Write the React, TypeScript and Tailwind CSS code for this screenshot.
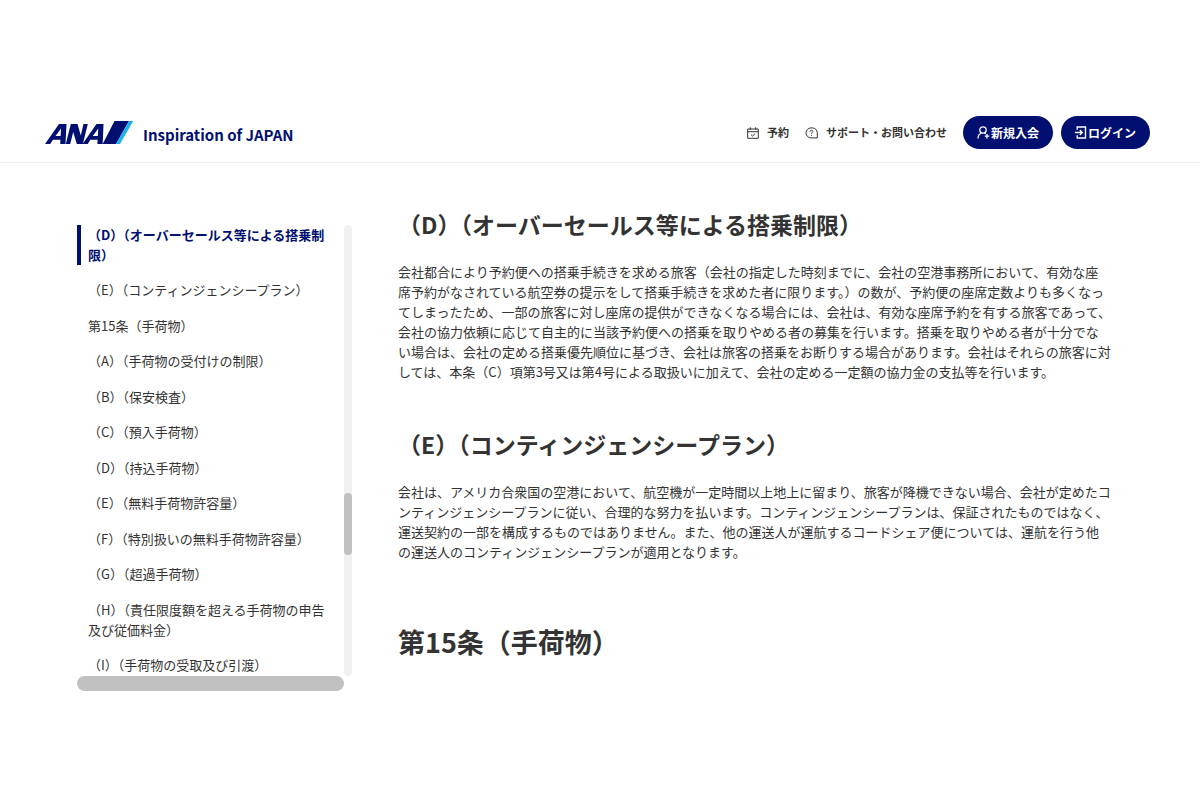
import React, { ReactNode } from "react";

type Chapter = {
  label: string;
  current?: boolean;
};

const chapters: Chapter[] = [
  { label: "（D）（オーバーセールス等による搭乗制限）", current: true },
  { label: "（E）（コンティンジェンシープラン）" },
  { label: "第15条（手荷物）" },
  { label: "（A）（手荷物の受付けの制限）" },
  { label: "（B）（保安検査）" },
  { label: "（C）（預入手荷物）" },
  { label: "（D）（持込手荷物）" },
  { label: "（E）（無料手荷物許容量）" },
  { label: "（F）（特別扱いの無料手荷物許容量）" },
  { label: "（G）（超過手荷物）" },
  { label: "（H）（責任限度額を超える手荷物の申告及び従価料金）" },
  { label: "（I）（手荷物の受取及び引渡）" },
];

const oversales = [
  "会社都合により予約便への搭乗手続きを求める旅客（会社の指定した時刻までに、会社の空港事務所において、有効な座",
  "席予約がなされている航空券の提示をして搭乗手続きを求めた者に限ります。）の数が、予約便の座席定数よりも多くなっ",
  "てしまったため、一部の旅客に対し座席の提供ができなくなる場合には、会社は、有効な座席予約を有する旅客であって、",
  "会社の協力依頼に応じて自主的に当該予約便への搭乗を取りやめる者の募集を行います。搭乗を取りやめる者が十分でな",
  "い場合は、会社の定める搭乗優先順位に基づき、会社は旅客の搭乗をお断りする場合があります。会社はそれらの旅客に対",
  "しては、本条（C）項第3号又は第4号による取扱いに加えて、会社の定める一定額の協力金の支払等を行います。",
];

const contingency = [
  "会社は、アメリカ合衆国の空港において、航空機が一定時間以上地上に留まり、旅客が降機できない場合、会社が定めたコ",
  "ンティンジェンシープランに従い、合理的な努力を払います。コンティンジェンシープランは、保証されたものではなく、",
  "運送契約の一部を構成するものではありません。また、他の運送人が運航するコードシェア便については、運航を行う他",
  "の運送人のコンティンジェンシープランが適用となります。",
];

const Logo = () => (
  <a href="#" className="flex items-end gap-2.5 text-[#000f70]">
    <svg width="88" height="24" viewBox="0 1 88 24" role="img" aria-label="ANA">
      <path
        fill="currentColor"
        fillRule="evenodd"
        d="M0 24 14 4h7.500L20.500 24h-5.300l.2-4.300H8L5.200 24zM10.500 16h5.100l.5-7.500z"
      />
      <path fill="currentColor" d="M20.800 24 25.800 4h6.700l3.300 11.500L38.500 4h4.300L37.800 24h-6L28.200 12 25.200 24z" />
      <path
        fill="currentColor"
        fillRule="evenodd"
        d="M37.500 24 51.500 4h7L57.700 24h-5.300l.2-4.300h-7.200L42.700 24zM47.800 16h5l.5-7.500z"
      />
      <path fill="currentColor" d="M57.700 24 69.500 1H84L71 24z" />
      <path fill="#1fb0ee" d="M71 24 84 1h4.300L75 24z" />
    </svg>
    <span className="text-[15px] leading-5 font-bold">Inspiration of JAPAN</span>
  </a>
);

const CalendarIcon = () => (
  <svg width="12" height="12" viewBox="0 0 12 12" fill="none" stroke="currentColor" aria-hidden="true">
    <path d="M.7 2h10.600v9.300H.7zM.7 4.700h10.600M3.300.3v2.700M8.700.3v2.700M4 7.700l1.500 1.400L8.200 6.600" />
  </svg>
);

const HelpIcon = () => (
  <svg width="13" height="12" viewBox="0 0 13 12" fill="none" stroke="currentColor" aria-hidden="true">
    <path d="M6 .9a5 5 0 0 0 0 10h6.300V5.900A5 5 0 0 0 7.300.9z" />
    <path d="M5.100 4.700c0-1 .6-1.400 1.400-1.400s1.400.5 1.400 1.200c0 .9-1.400 1-1.400 2.200M6.500 7.800v1" />
  </svg>
);

const JoinIcon = () => (
  <svg width="13" height="13" viewBox="0 0 13 13" fill="none" stroke="currentColor" strokeWidth="1.300" aria-hidden="true">
    <circle cx="6" cy="4" r="3.200" />
    <path d="M1 12.500c0-3 1.500-4.700 3.500-5.500M7.500 7l1.300 1M10 8v4.500M7.700 10.200h4.600" />
  </svg>
);

const LoginIcon = () => (
  <svg width="12" height="13" viewBox="0 0 12 13" fill="none" stroke="currentColor" strokeWidth="1.400" aria-hidden="true">
    <path d="M2.200 3.800V1h8.300v11H2.200V9.200M0 6.500h7M4.800 4l2.500 2.500L4.800 9" />
  </svg>
);

const PillButton = ({ icon, children }: { icon: ReactNode; children: ReactNode }) => (
  <button
    type="button"
    className="flex h-[33px] items-center gap-px rounded-full bg-[#000f70] px-[14px] text-xs font-bold text-white"
  >
    {icon}
    {children}
  </button>
);

const Lines = ({ lines }: { lines: string[] }) => (
  <p className="text-[13px] leading-5 whitespace-nowrap">
    {lines.map((line) => (
      <React.Fragment key={line}>
        {line}
        <br />
      </React.Fragment>
    ))}
  </p>
);

const Header = () => (
  <header className="flex items-center justify-between border-b border-[#f0f0f0] pt-[116px] pr-[50px] pb-[13px] pl-[45px]">
    <Logo />
    <nav className="flex items-center gap-2">
      <a href="#" className="mr-2 flex items-center gap-2 text-[11px] font-bold">
        <CalendarIcon />
        予約
      </a>
      <a href="#" className="mr-2 flex items-center gap-2 text-[11px] font-bold">
        <HelpIcon />
        サポート・お問い合わせ
      </a>
      <PillButton icon={<JoinIcon />}>新規入会</PillButton>
      <PillButton icon={<LoginIcon />}>ログイン</PillButton>
    </nav>
  </header>
);

const Sidebar = () => (
  <aside className="w-[275px] shrink-0 pt-[17px]">
    <div className="flex h-[451px]">
      <ul className="flex flex-1 flex-col justify-between pb-px text-[13px] leading-5">
        {chapters.map((chapter) => (
          <li
            key={chapter.label}
            className={
              chapter.current
                ? "border-l-4 border-[#000f70] pr-2 pl-[7px] font-bold text-[#000f70]"
                : "pr-2 pl-[11px]"
            }
          >
            <a href="#" className="block">
              {chapter.label}
            </a>
          </li>
        ))}
      </ul>
      <div className="w-2 rounded-full bg-[#f1f1f1] pt-[268px]">
        <div className="h-[62px] rounded-full bg-[#c1c1c1]" />
      </div>
    </div>
    <div className="mr-2 h-[15px] rounded-full bg-[#c1c1c1]" />
  </aside>
);

export default function App() {
  return (
    <div
      lang="ja"
      className="min-h-screen bg-white font-['Noto_Sans_CJK_JP',sans-serif] text-[#333333]"
    >
      <Header />
      <div className="flex gap-[46px] pt-[45px] pr-[50px] pl-[77px]">
        <Sidebar />
        <main className="min-w-0 flex-1">
          <h3 className="text-[23px] leading-8 font-bold">（D）（オーバーセールス等による搭乗制限）</h3>
          <div className="pt-[22px] pb-[46px]">
            <Lines lines={oversales} />
          </div>
          <h3 className="text-[23px] leading-8 font-bold">（E）（コンティンジェンシープラン）</h3>
          <div className="pt-[22px] pb-[60px]">
            <Lines lines={contingency} />
          </div>
          <h2 className="text-[27px] leading-10 font-bold">第15条（手荷物）</h2>
        </main>
      </div>
    </div>
  );
}
